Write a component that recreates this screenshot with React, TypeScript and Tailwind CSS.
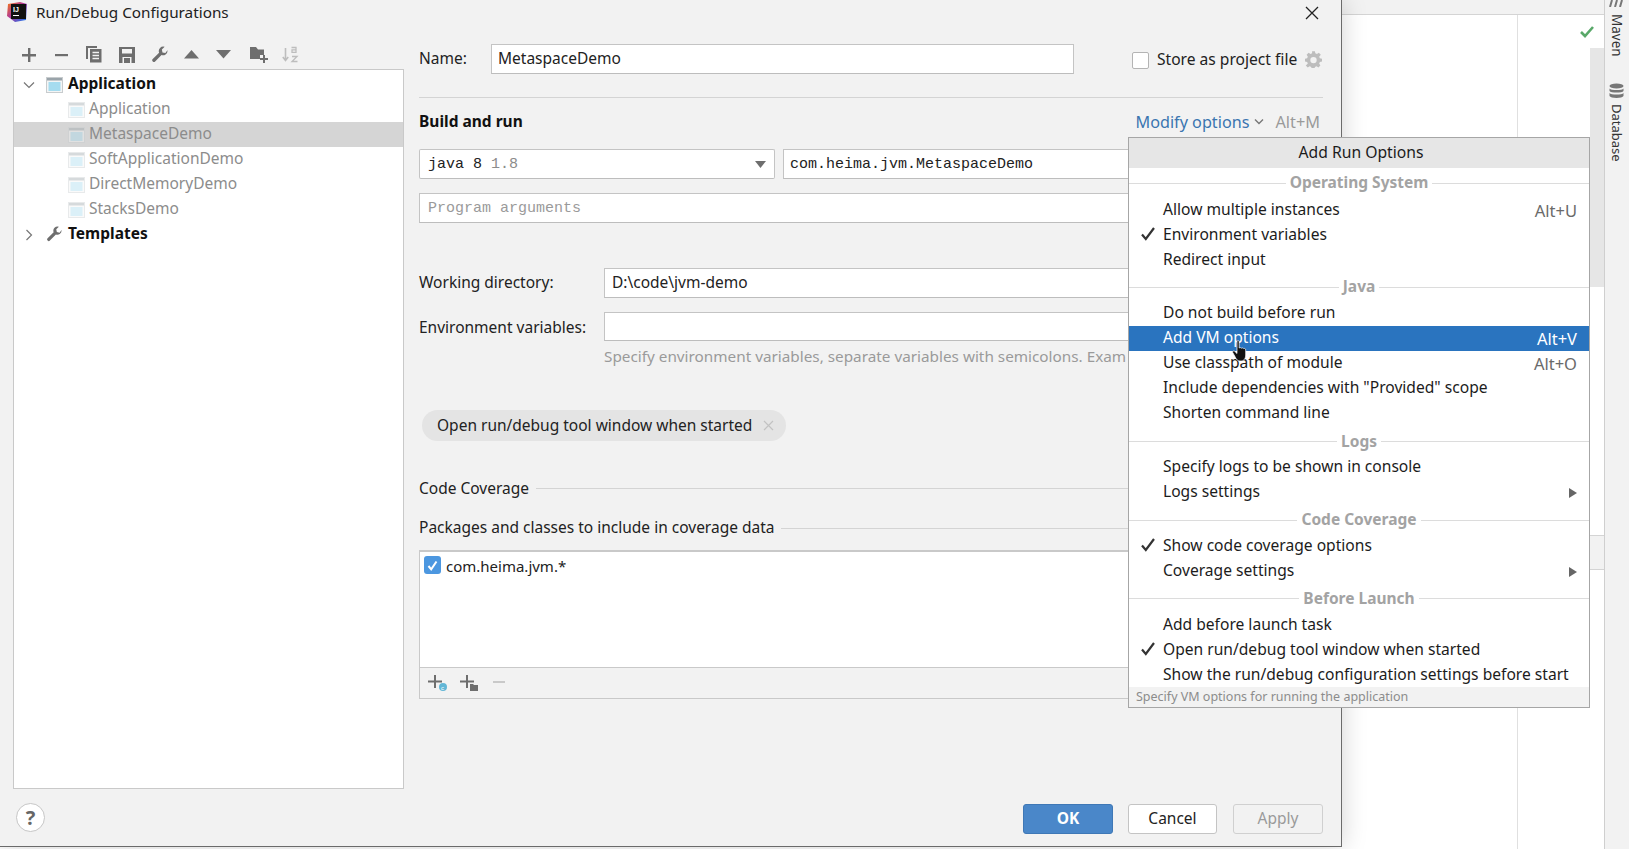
import React from "react";

const F = "font-['Noto_Sans',sans-serif]";

function IJLogo() {
  return (
    <svg width="22" height="22" viewBox="0 0 22 22" className="shrink-0 mb-[3px]">
      <defs>
        <linearGradient id="ij" x1="0" y1="0" x2="1" y2="1">
          <stop offset="0" stopColor="#f97a12" />
          <stop offset="0.45" stopColor="#b0389a" />
          <stop offset="1" stopColor="#087cfa" />
        </linearGradient>
      </defs>
      <path d="M2 3 L14 1 L21 3 L20 19 L9 21 L1 15 Z" fill="url(#ij)" />
      <rect x="5" y="3" width="15" height="15" fill="#111" />
      <text x="7" y="11" fontSize="7" fontWeight="700" fill="#fff" fontFamily="Liberation Sans">IJ</text>
      <rect x="7" y="14" width="6" height="1" fill="#fff" />
    </svg>
  );
}

function AppIcon({ faded }: { faded?: boolean }) {
  return (
    <svg width="17" height="17" viewBox="0 0 17 17" className={faded ? "opacity-40 shrink-0" : "shrink-0"}>
      <rect x="0.5" y="1.5" width="16" height="15" fill="#f4f5f5" stroke="#c8ccce" />
      <rect x="1" y="2" width="15" height="2.5" fill="#9aa4aa" />
      <rect x="2.5" y="6" width="12" height="9" fill="#a6dcef" />
    </svg>
  );
}

function Wrench({ size = 18, color = "#6e6e6e" }: { size?: number; color?: string }) {
  return (
    <svg width={size} height={size} viewBox="0 0 24 24">
      <path
        fill={color}
        d="M22 6.5a6 6 0 0 1-8 5.6L5.5 20.6a2.2 2.2 0 0 1-3.1 0l-.1-.1a2.2 2.2 0 0 1 0-3.1l8.5-8.5A6 6 0 0 1 18.2 1L14.5 4.7l.8 3.9 3.9.8 2.7-3.6c.1.2.1.5.1.7z"
      />
    </svg>
  );
}

function Toolbar() {
  return (
    <div className="h-[43px] flex items-center pl-[8px] pt-[14px]">
      <span className="w-[32px] flex justify-start pl-[1px]">
        <svg width="14" height="14" viewBox="0 0 14 14"><path d="M6 0h2.4v6H14v2.4H8.4V14H6V8.400H0V6h6z" fill="#6e6e6e" /></svg>
      </span>
      <span className="w-[33px] flex justify-start pl-[2px]">
        <svg width="14" height="14" viewBox="0 0 14 14"><rect x="0" y="6" width="13" height="2.2" fill="#6e6e6e" /></svg>
      </span>
      <span className="w-[33px] flex justify-start">
        <svg width="16" height="17" viewBox="0 0 16 17">
          <path d="M0 0h11v2H2v11H0z" fill="#6e6e6e" />
          <rect x="4" y="3" width="11.5" height="13.5" fill="#6e6e6e" />
          <path d="M6.5 6.500h6.500M6.500 9.500h6.500M6.500 12.500h6.500" stroke="#f2f2f2" strokeWidth="1.3" />
        </svg>
      </span>
      <span className="w-[32px] flex justify-start">
        <svg width="16" height="16" viewBox="0 0 16 16">
          <path d="M0 0h16v16H0z" fill="#6e6e6e" />
          <rect x="3" y="2" width="10" height="4.5" fill="#f2f2f2" />
          <rect x="3.5" y="10" width="9" height="6" fill="#f2f2f2" />
          <rect x="5" y="11" width="6" height="5" fill="#6e6e6e" />
        </svg>
      </span>
      <span className="w-[33px] flex justify-start"><Wrench /></span>
      <span className="w-[32px] flex justify-start">
        <svg width="15" height="9" viewBox="0 0 15 9"><path d="M7.500 0L15 8.500H0z" fill="#6e6e6e" /></svg>
      </span>
      <span className="w-[34px] flex justify-start">
        <svg width="15" height="9" viewBox="0 0 15 9"><path d="M0 0h15L7.500 8.500z" fill="#6e6e6e" /></svg>
      </span>
      <span className="w-[32px] flex justify-start">
        <svg width="18" height="17" viewBox="0 0 18 17">
          <path d="M0 1h6l2 2.500h6V9H10v4H0z" fill="#6e6e6e" />
          <path d="M13 9h2v3h3v2h-3v3h-2v-3h-3v-2h3z" fill="#6e6e6e" />
        </svg>
      </span>
      <span className="flex">
        <svg width="17" height="17" viewBox="0 0 17 17">
          <path d="M3.500 2v12M0.800 11l2.700 3.500L6.200 11" stroke="#bdbdbd" strokeWidth="1.6" fill="none" />
          <path d="M9.500 1.500h4.500v4.800h-4v-2.400h4M10 10.500h5l-5 5h5.500" stroke="#bdbdbd" strokeWidth="1.3" fill="none" />
        </svg>
      </span>
    </div>
  );
}

function TreeRow({ label, selected }: { label: string; selected?: boolean }) {
  return (
    <div className={`h-[25px] flex items-center pl-[54px] gap-[4px] ${selected ? "bg-[#d5d5d5]" : ""}`}>
      <AppIcon faded />
      <span className="text-[15.5px] text-[#8c8c8c] leading-none mb-[2px]">{label}</span>
    </div>
  );
}

function Tree() {
  return (
    <div className="w-[391px] h-[720px] bg-white border border-[#c9c9c9] pt-[2px]">
      <div className="h-[25px] flex items-center pl-[9px]">
        <svg width="12" height="12" viewBox="0 0 12 12" className="shrink-0"><path d="M1 3.500l5 5 5-5" stroke="#777" strokeWidth="1.2" fill="none" /></svg>
        <span className="ml-[11px]"><AppIcon /></span>
        <span className="ml-[5px] text-[15.5px] font-bold text-[#111] leading-none mb-[2px]">Application</span>
      </div>
      <TreeRow label="Application" />
      <TreeRow label="MetaspaceDemo" selected />
      <TreeRow label="SoftApplicationDemo" />
      <TreeRow label="DirectMemoryDemo" />
      <TreeRow label="StacksDemo" />
      <div className="h-[25px] flex items-center pl-[9px]">
        <svg width="12" height="12" viewBox="0 0 12 12" className="shrink-0"><path d="M3.500 1l5 5-5 5" stroke="#777" strokeWidth="1.2" fill="none" /></svg>
        <span className="ml-[11px]"><Wrench size={17} /></span>
        <span className="ml-[5px] text-[15.5px] font-bold text-[#111] leading-none mb-[2px]">Templates</span>
      </div>
    </div>
  );
}

function LineTitle({ label, className, drop }: { label: string; className: string; drop?: boolean }) {
  return (
    <div className={`h-[24px] flex items-center gap-[7px] ${className}`}>
      <span className={`text-[15.5px] text-[#222] whitespace-nowrap leading-none ${drop ? "mt-[2px]" : ""}`}>{label}</span>
      <div className="flex-1 h-px bg-[#d4d4d4]" />
    </div>
  );
}

function RightPanel() {
  const input = "bg-white border border-[#c4c4c4] border-b-[#bdbdbd] h-[30px] flex items-center";
  return (
    <div className="w-[904px] pt-[18px] ml-[-2px] flex flex-col">
      <div className="h-[30px] flex items-center">
        <span className="w-[72px] text-[15.5px] text-[#222] leading-none">Name:</span>
        <div className={`${input} w-[583px] pl-[6px] text-[15.5px] text-[#222]`}>MetaspaceDemo</div>
        <span className="ml-[58px] w-[17px] h-[17px] mt-[2px] bg-white border border-[#b4b4b4] rounded-[2px]" />
        <span className="ml-[8px] mt-[2px] text-[15.6px] text-[#222] leading-none whitespace-nowrap">Store as project file</span>
        <span className="ml-[8px] flex">
          <svg width="17" height="18" viewBox="0 0 24 24">
            <path
              fill="#bdbdbd"
              fillRule="evenodd"
              d="M10 1h4l.6 3 2.300 1 2.600-1.700 2.800 2.800L20 8.700l1 2.300 3 .6v4l-3 .6-1 2.300 1.700 2.600-2.800 2.800-2.600-1.700-2.300 1-.6 3h-4l-.6-3-2.300-1-2.600 1.700-2.800-2.800L4 18.500l-1-2.300-3-.6v-4l3-.6 1-2.300-1.700-2.600 2.800-2.800L7.700 5l2.300-1zM12 9a4.500 4.500 0 1 0 0 9 4.500 4.500 0 0 0 0-9z"
            />
          </svg>
        </span>
      </div>
      <div className="mt-[23px] h-px bg-[#d4d4d4]" />
      <div className="mt-[12px] h-[24px] flex items-center">
        <span className="text-[15.5px] font-bold text-[#111] leading-none">Build and run</span>
        <span className="ml-auto text-[16.2px] text-[#3a75b0] leading-none">Modify options</span>
        <svg width="10" height="8" viewBox="0 0 10 8" className="ml-[5px]"><path d="M1 1.500l4 4 4-4" stroke="#777" strokeWidth="1.4" fill="none" /></svg>
        <span className="ml-[11px] mr-[3px] text-[16.3px] text-[#9a9a9a] leading-none">Alt+M</span>
      </div>
      <div className="mt-[15px] flex gap-[8px] font-['Liberation_Mono',monospace] text-[15px]">
        <div className={`${input} w-[356px] rounded-[2px] pl-[8px] pr-[8px] pt-[3px] text-[#222]`}>
          <span>java 8</span>
          <span className="ml-[9px] text-[#8c8c8c]">1.8</span>
          <svg width="11" height="7" viewBox="0 0 11 7" className="ml-auto mb-[3px]"><path d="M0 0h11L5.500 7z" fill="#6e6e6e" /></svg>
        </div>
        <div className={`${input} flex-1 pl-[6px] pt-[3px] text-[#222]`}>com.heima.jvm.MetaspaceDemo</div>
      </div>
      <div className={`${input} mt-[14px] pl-[8px] pt-[3px] font-['Liberation_Mono',monospace] text-[15px] text-[#9a9a9a]`}>Program arguments</div>
      <div className="mt-[45px] h-[30px] flex items-center">
        <span className="w-[185px] text-[15.5px] text-[#222] leading-none">Working directory:</span>
        <div className={`${input} flex-1 pl-[7px] text-[15.5px] text-[#222]`}>D:\code\jvm-demo</div>
      </div>
      <div className="mt-[14px] h-[29px] flex items-center">
        <span className="w-[185px] mt-[2px] text-[15.5px] text-[#222] leading-none whitespace-nowrap">Environment variables:</span>
        <div className={`${input} flex-1 !h-[29px]`} />
      </div>
      <div className="mt-[4px] h-[24px] pl-[185px] pb-[2px] flex items-center text-[15.3px] text-[#9a9a9a] whitespace-nowrap overflow-hidden">
        Specify environment variables, separate variables with semicolons. Exam
      </div>
      <div className="mt-[41px] ml-[3px] self-start h-[31px] pl-[15px] pr-[12px] rounded-full bg-[#e4e4e4] flex items-center gap-[11px]">
        <span className="text-[15.5px] text-[#222] leading-none whitespace-nowrap">Open run/debug tool window when started</span>
        <svg width="11" height="11" viewBox="0 0 11 11"><path d="M1 1l9 9M10 1l-9 9" stroke="#c2c2c2" strokeWidth="1.2" /></svg>
      </div>
      <LineTitle label="Code Coverage" className="mt-[35px]" drop />
      <LineTitle label="Packages and classes to include in coverage data" className="mt-[16px]" />
      <div className="mt-[10px] h-[149px] bg-white border border-[#c9c9c9] border-t-2 flex flex-col">
        <div className="flex-1 pt-[3px] pl-[4px] flex items-start gap-[5px]">
          <span className="mt-[1px] w-[17px] h-[18px] rounded-[3px] bg-[#4c97e0] flex items-center justify-center">
            <svg width="11" height="11" viewBox="0 0 11 11"><path d="M1.500 6l2.700 3.300L9.500 1.500" stroke="#fff" strokeWidth="2" fill="none" /></svg>
          </span>
          <span className="text-[15px] text-[#222] leading-[23px]">com.heima.jvm.*</span>
        </div>
        <div className="h-[31px] bg-[#f2f2f2] border-t border-[#c9c9c9] flex items-center pl-[8px] gap-[12px]">
          <svg width="20" height="18" viewBox="0 0 20 18">
            <path d="M6 1h2v5.500h6v2H8V14H6V8.500H0v-2h6z" fill="#6e6e6e" />
            <circle cx="15" cy="13" r="4" fill="#62b6d6" />
            <text x="13" y="15.500" fontSize="6" fill="#fff" fontFamily="Liberation Sans">c</text>
          </svg>
          <svg width="20" height="18" viewBox="0 0 20 18">
            <path d="M6 1h2v5.500h6v2H8V14H6V8.500H0v-2h6z" fill="#6e6e6e" />
            <path d="M10 10h3l1 1h4v6h-8z" fill="#6e6e6e" />
          </svg>
          <svg width="14" height="18" viewBox="0 0 14 18"><rect x="1" y="7" width="12" height="2" fill="#c9c9c9" /></svg>
        </div>
      </div>
      <div className="mt-[105px] flex justify-end gap-[16px] text-[15.5px]">
        <div className="w-[90px] mr-[-1px] h-[30px] rounded-[3px] bg-[#4a87c9] border border-[#3f78b6] text-white font-bold flex items-center justify-center">OK</div>
        <div className="w-[89px] h-[30px] rounded-[3px] bg-white border border-[#c4c4c4] text-[#222] flex items-center justify-center">Cancel</div>
        <div className="w-[90px] h-[30px] rounded-[3px] bg-[#f2f2f2] border border-[#d0d0d0] text-[#9a9a9a] flex items-center justify-center">Apply</div>
      </div>
    </div>
  );
}

function SectionTitle({ label, h, pad }: { label: string; h: string; pad?: string }) {
  return (
    <div className={`flex items-center gap-[4px] shrink-0 ${h} ${pad ?? ""}`}>
      <div className="flex-1 h-px bg-[#dcdcdc]" />
      <span className="text-[15.5px] font-bold text-[#a3a3a3] leading-none whitespace-nowrap">{label}</span>
      <div className="flex-1 h-px bg-[#dcdcdc]" />
    </div>
  );
}

function Item({ label, shortcut, checked, active, arrow, h = "h-[25px]" }: { label: string; shortcut?: string; checked?: boolean; active?: boolean; arrow?: boolean; h?: string }) {
  return (
    <div className={`${h} shrink-0 flex items-center pr-[12px] ${active ? "bg-[#2a74bf] text-white" : "text-[#1c1c1c]"}`}>
      <span className="w-[34px] pl-[12px] flex items-center mb-[3px]">
        {checked && (
          <svg width="14" height="14" viewBox="0 0 14 14"><path d="M1 7.500l3.800 4.500L13 1" stroke="#333" strokeWidth="2.200" fill="none" /></svg>
        )}
      </span>
      <span className="text-[15.6px] leading-none whitespace-nowrap mb-[1px]">{label}</span>
      {shortcut && <span className={`ml-auto mt-[2px] text-[16.5px] leading-none ${active ? "text-white" : "text-[#6a6a6a]"}`}>{shortcut}</span>}
      {arrow && (
        <svg width="8" height="10" viewBox="0 0 8 10" className="ml-auto"><path d="M0 0l8 5-8 5z" fill="#666" /></svg>
      )}
    </div>
  );
}

function Popup() {
  return (
    <div className="absolute left-[1128px] top-[137px] w-[462px] h-[571px] bg-white border border-[#a6a6a6] flex flex-col overflow-hidden">
      <div className="h-[30px] shrink-0 bg-[#e6e6e6] pb-[1px] pl-[4px] flex items-center justify-center text-[15.7px] text-[#1c1c1c]">Add Run Options</div>
      <SectionTitle label="Operating System" h="h-[30px]" />
      <Item label="Allow multiple instances" shortcut="Alt+U" />
      <Item label="Environment variables" checked />
      <Item label="Redirect input" />
      <SectionTitle label="Java" h="h-[28px]" />
      <Item label="Do not build before run" />
      <Item label="Add VM options" shortcut="Alt+V" active />
      <Item label="Use classpath of module" shortcut="Alt+O" />
      <Item label={'Include dependencies with "Provided" scope'} />
      <Item label="Shorten command line" />
      <SectionTitle label="Logs" h="h-[29px]" pad="pt-[2px]" />
      <Item label="Specify logs to be shown in console" />
      <Item label="Logs settings" arrow />
      <SectionTitle label="Code Coverage" h="h-[29px]" pad="pt-[1px]" />
      <Item label="Show code coverage options" checked />
      <Item label="Coverage settings" arrow />
      <SectionTitle label="Before Launch" h="h-[29px]" />
      <Item label="Add before launch task" />
      <Item label="Open run/debug tool window when started" checked />
      <Item label="Show the run/debug configuration settings before start" h="h-[24px]" />
      <div className="flex-1 bg-[#f2f2f2] pl-[7px] flex items-center text-[12.5px] text-[#8c8c8c] leading-none">Specify VM options for running the application</div>
    </div>
  );
}

function HandCursor() {
  return (
    <svg width="17" height="22" viewBox="0 0 17 22" className="absolute left-[1232px] top-[340px]">
      <path
        d="M5 1.500c0-1.200 2.200-1.200 2.200 0V8c.8-.5 1.800-.5 2.300.2.800-.5 1.800-.3 2.200.4.800-.4 2-.1 2 1.200V15c0 3-1.500 6-4.500 6H8c-2.500 0-3.500-1.500-4.500-3.500L.7 12.500c-.5-1.300 1-2.200 2-1.200L5 13.500z"
        fill="#111"
        stroke="#fff"
        strokeWidth="0.7"
      />
    </svg>
  );
}

function IdeBackground() {
  return (
    <div className="w-[1629px] h-[849px] flex bg-white">
      <div className="flex-1 flex flex-col">
        <div className="h-[15px] bg-[#f2f2f2] border-b border-[#d4d4d4]" />
        <div className="flex-1 flex">
          <div className="w-[1518px] border-r border-[#e0e0e0]" />
          <div className="flex-1 flex flex-col">
            <div className="h-[33px] flex justify-end pr-[10px] pt-[11px]">
              <svg width="14" height="12" viewBox="0 0 14 12"><path d="M1 6l4 4 8-9" stroke="#59a869" strokeWidth="2.600" fill="none" /></svg>
            </div>
            <div className="flex-1 flex justify-end">
              <div className="w-[14px] flex flex-col">
                <div className="h-[239px] bg-[#e6e6e6]" />
                <div className="h-[248px] bg-white" />
                <div className="h-[35px] bg-[#f2f2f2] border-y border-[#d4d4d4]" />
                <div className="flex-1 bg-white" />
              </div>
            </div>
          </div>
        </div>
      </div>
      <div className="w-[25px] bg-[#f2f2f2] border-l border-[#cfcfcf] flex flex-col items-center text-[13.5px] text-[#333] pr-[2px]">
        <span className="h-[14px] text-[#666] leading-none overflow-hidden">
          <svg width="16" height="7" viewBox="0 0 16 7"><path d="M2 7l2-7M7 7l2-7M12 7l2-7" stroke="#777" strokeWidth="2" /></svg>
        </span>
        <span className="[writing-mode:vertical-rl] leading-none">Maven</span>
        <svg width="15" height="16" viewBox="0 0 15 16" className="mt-[26px]">
          <ellipse cx="7.500" cy="3" rx="7" ry="2.500" fill="#777" />
          <path d="M0.500 5.500c1 2 13 2 14 0v2.500c-1 2-13 2-14 0zM0.500 10c1 2 13 2 14 0v3c-1 2.500-13 2.500-14 0z" fill="#777" />
        </svg>
        <span className="mt-[5px] text-[13px] [writing-mode:vertical-rl] leading-none">Database</span>
      </div>
    </div>
  );
}

export default function App() {
  return (
    <div className={`relative w-[1629px] h-[849px] overflow-hidden ${F}`}>
      <IdeBackground />
      <div className="absolute left-0 top-0 w-[1342px] h-[847px] bg-[#f2f2f2] border-r border-b border-[#6b6b6b] shadow-[0_0_24px_rgba(0,0,0,0.18)] flex flex-col">
        <div className="h-[26px] shrink-0 flex items-center pl-[6px] pr-[22px]">
          <IJLogo />
          <span className="ml-[8px] text-[15.3px] text-[#222] leading-none">Run/Debug Configurations</span>
          <svg width="14" height="14" viewBox="0 0 14 14" className="ml-auto"><path d="M1 1l12 12M13 1L1 13" stroke="#222" strokeWidth="1.300" /></svg>
        </div>
        <div className="flex-1 flex">
          <div className="w-[421px] pl-[13px] flex flex-col">
            <Toolbar />
            <Tree />
            <div className="mt-[14px] ml-[3px] w-[29px] h-[29px] rounded-full bg-white border border-[#c6c6c6] flex items-center justify-center text-[20px] font-bold text-[#666] leading-none">?</div>
          </div>
          <RightPanel />
        </div>
      </div>
      <Popup />
      <HandCursor />
    </div>
  );
}
